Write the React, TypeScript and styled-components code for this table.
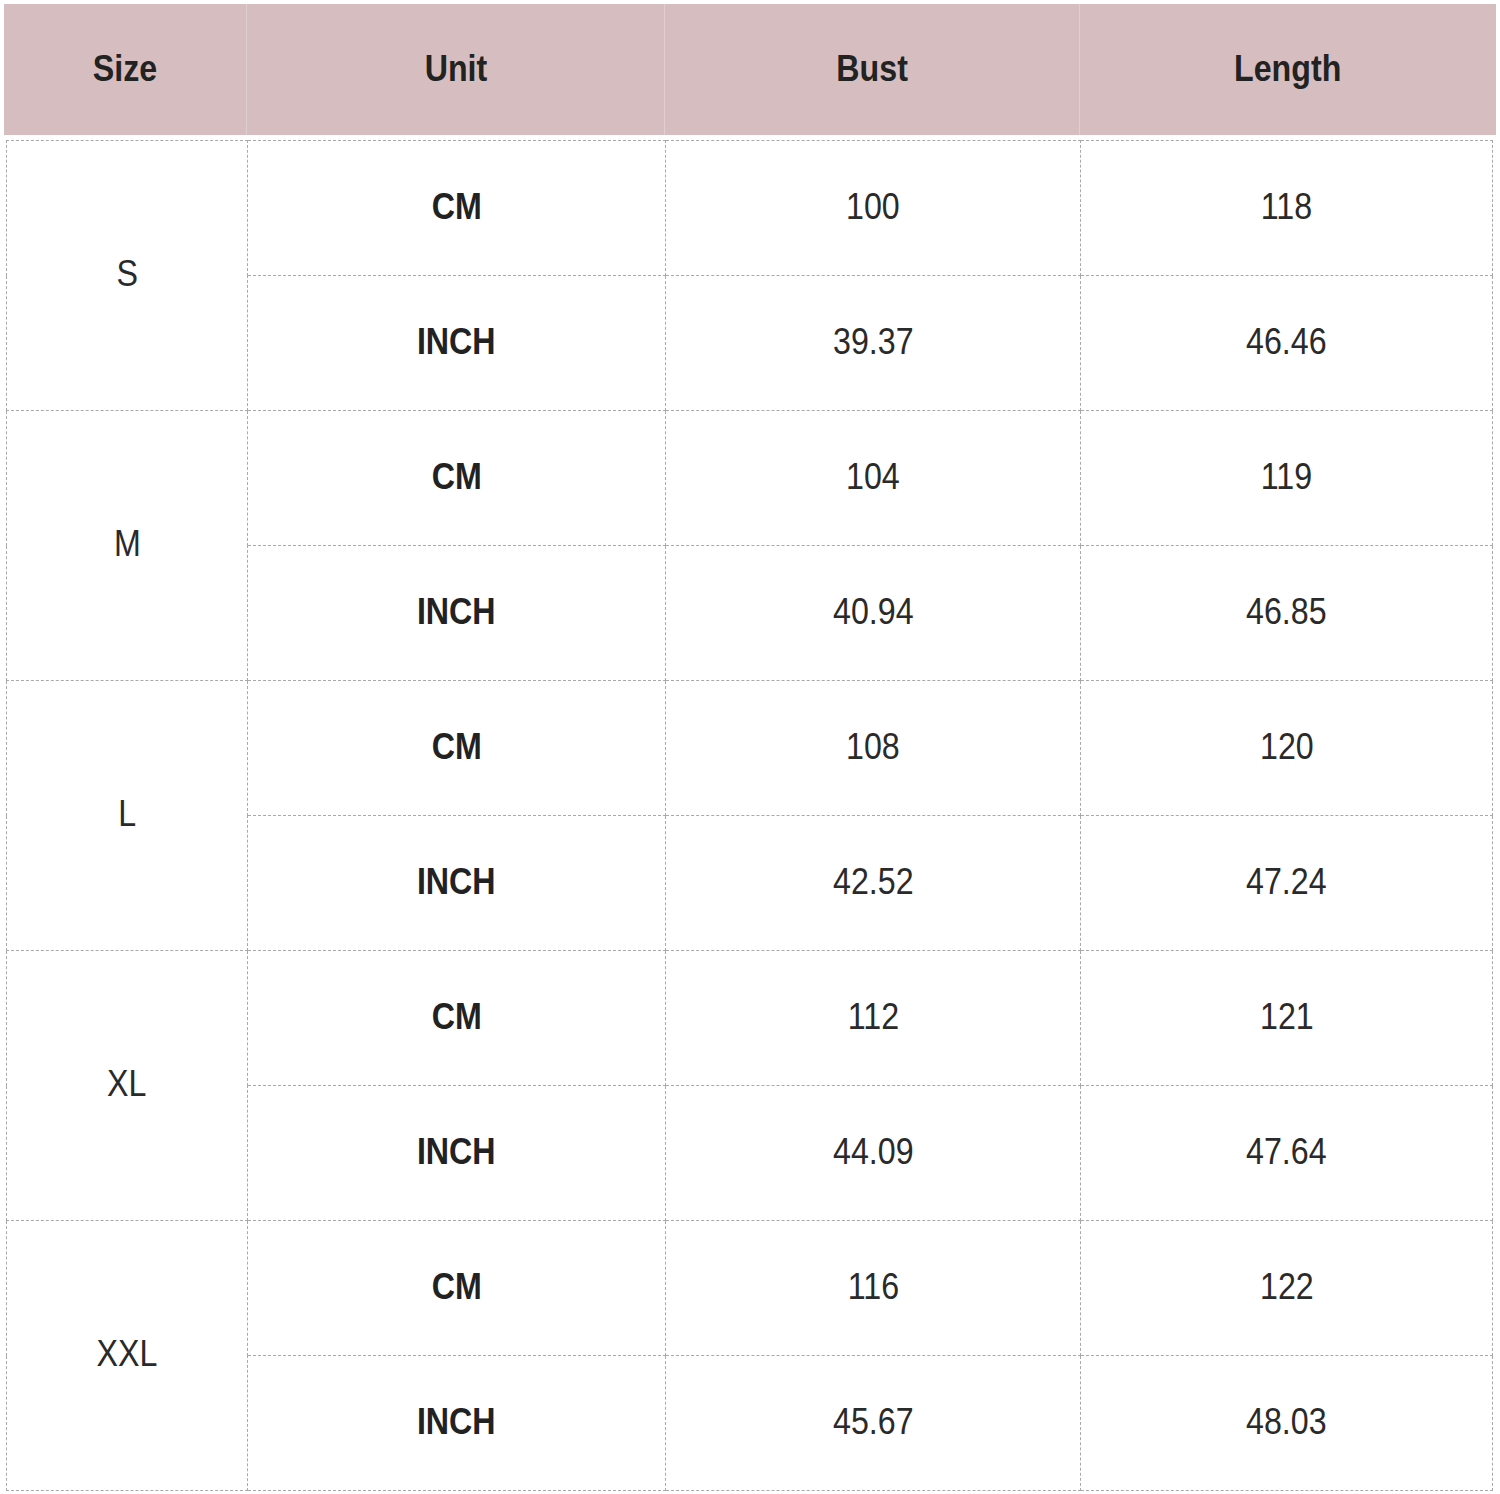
import React from "react";
import styled, { createGlobalStyle } from "styled-components";

const Global = createGlobalStyle`
  html, body { margin: 0; padding: 0; background: #ffffff; }
  body { font-family: "Liberation Sans", Arial, sans-serif; }
`;

const Page = styled.div`
  width: 1500px;
  height: 1494px;
  padding: 4px 0 0 4px;
  box-sizing: border-box;
  background: #fff;
`;

const HeaderRow = styled.div`
  display: grid;
  grid-template-columns: 243px 418px 415px 416px;
  height: 131px;
  width: 1492px;
  background: #d6bec0;
`;

const HeadCell = styled.div<{ $last?: boolean }>`
  display: flex;
  align-items: center;
  justify-content: center;
  border-right: ${(p) => (p.$last ? "none" : "1px solid rgba(255,255,255,0.25)")};
`;

const Label = styled.span<{ $bold?: boolean }>`
  display: inline-block;
  font-size: 37px;
  line-height: 1;
  font-weight: ${(p) => (p.$bold ? 700 : 400)};
  color: ${(p) => (p.$bold ? "#222" : "#2a2a2a")};
  transform: scaleX(0.87) translateY(-1px);
`;

const Table = styled.table`
  margin: 5px 0 0 2px;
  width: 1486px;
  border-collapse: collapse;
  table-layout: fixed;
`;

const Td = styled.td`
  height: 132px;
  padding: 0 0 2px 0;
  border: 1px dashed #a9a9a9;
  text-align: center;
  vertical-align: middle;
`;

const rows = [
  { size: "S", cm: ["100", "118"], inch: ["39.37", "46.46"] },
  { size: "M", cm: ["104", "119"], inch: ["40.94", "46.85"] },
  { size: "L", cm: ["108", "120"], inch: ["42.52", "47.24"] },
  { size: "XL", cm: ["112", "121"], inch: ["44.09", "47.64"] },
  { size: "XXL", cm: ["116", "122"], inch: ["45.67", "48.03"] },
];

export default function App() {
  return (
    <Page>
      <Global />
      <HeaderRow>
        <HeadCell><Label $bold>Size</Label></HeadCell>
        <HeadCell><Label $bold>Unit</Label></HeadCell>
        <HeadCell><Label $bold>Bust</Label></HeadCell>
        <HeadCell $last><Label $bold>Length</Label></HeadCell>
      </HeaderRow>
      <Table>
        <colgroup>
          <col style={{ width: 241 }} />
          <col style={{ width: 418 }} />
          <col style={{ width: 415 }} />
          <col style={{ width: 412 }} />
        </colgroup>
        <tbody>
          {rows.map((r) => (
            <React.Fragment key={r.size}>
              <tr>
                <Td rowSpan={2}><Label>{r.size}</Label></Td>
                <Td><Label $bold>CM</Label></Td>
                <Td><Label>{r.cm[0]}</Label></Td>
                <Td><Label>{r.cm[1]}</Label></Td>
              </tr>
              <tr>
                <Td><Label $bold>INCH</Label></Td>
                <Td><Label>{r.inch[0]}</Label></Td>
                <Td><Label>{r.inch[1]}</Label></Td>
              </tr>
            </React.Fragment>
          ))}
        </tbody>
      </Table>
    </Page>
  );
}
